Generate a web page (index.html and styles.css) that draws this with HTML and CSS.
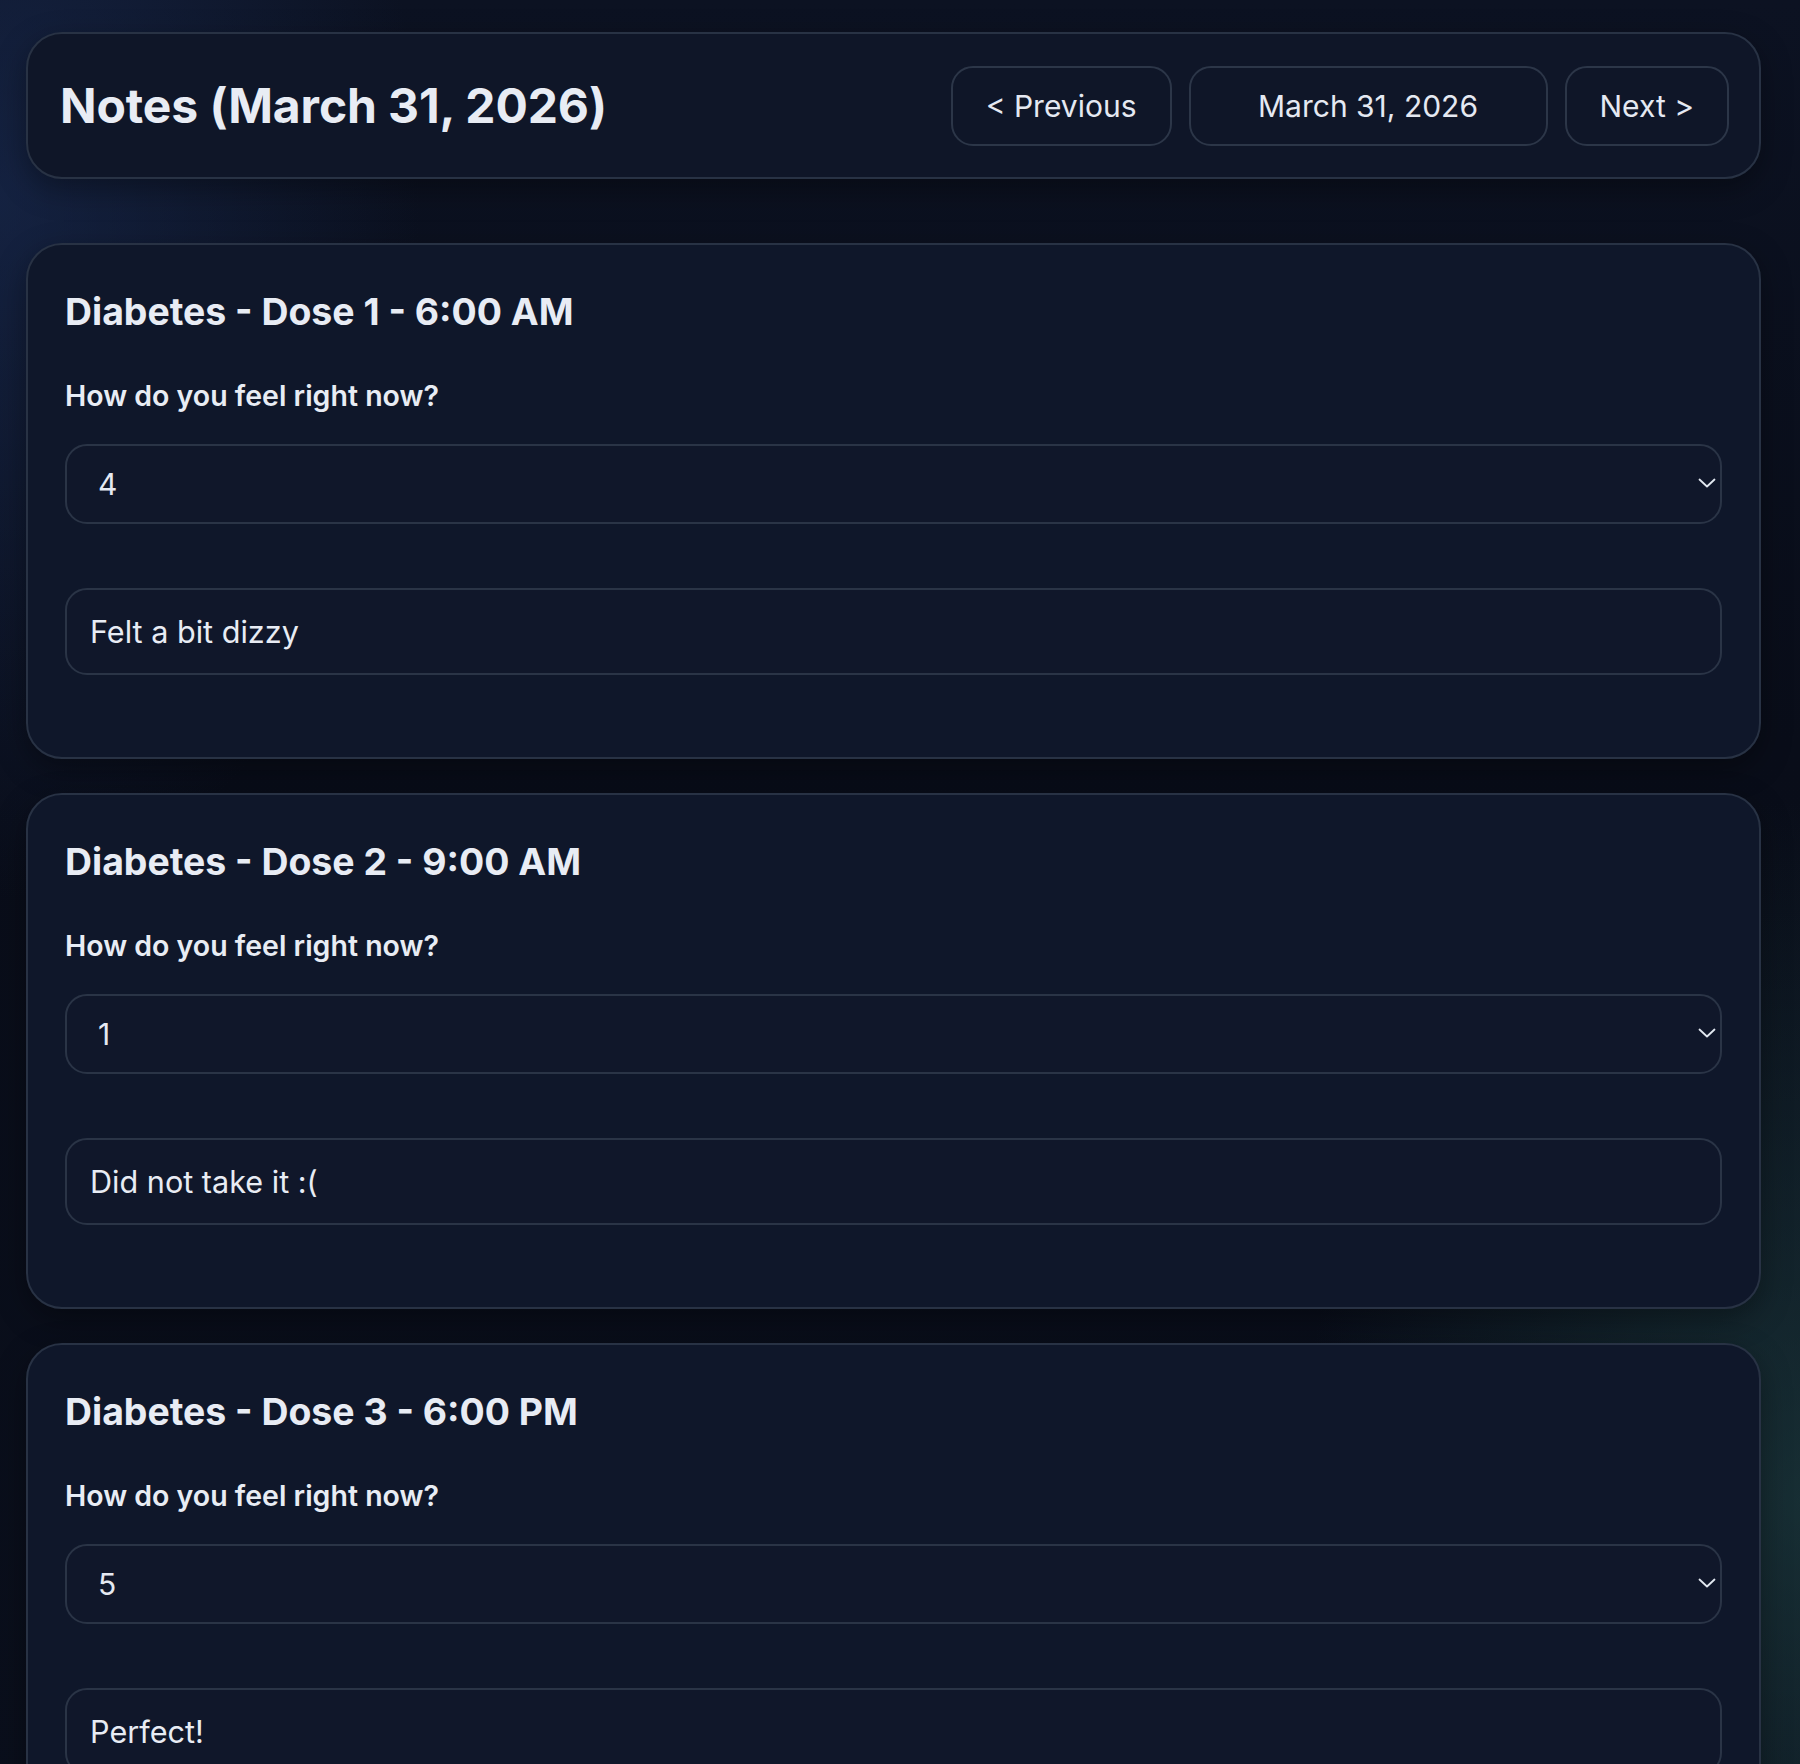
FILE: index.html
```html
<!DOCTYPE html>
<html lang="en">
<head>
<meta charset="utf-8">
<title>Notes</title>
<link rel="stylesheet" href="styles.css">
</head>
<body>
<div class="page">
  <header class="topbar">
    <h1 class="title">Notes (March 31, 2026)</h1>
    <nav class="datenav">
      <button class="btn">&lt; Previous</button>
      <button class="btn btn-date">March 31, 2026</button>
      <button class="btn">Next &gt;</button>
    </nav>
  </header>

  <section class="card">
    <h2 class="card-title">Diabetes - Dose 1 - 6:00 AM</h2>
    <label class="label">How do you feel right now?</label>
    <div class="select-wrap">
      <select class="select"><option>4</option></select>
      <svg class="chev" viewBox="0 0 18 10" width="18" height="10"><path d="M1.5 1.5 L9 8.5 L16.5 1.5" fill="none" stroke="#e2e8f0" stroke-width="1.8" stroke-linecap="round" stroke-linejoin="round"/></svg>
    </div>
    <input class="input" type="text" value="Felt a bit dizzy">
  </section>

  <section class="card">
    <h2 class="card-title">Diabetes - Dose 2 - 9:00 AM</h2>
    <label class="label">How do you feel right now?</label>
    <div class="select-wrap">
      <select class="select"><option>1</option></select>
      <svg class="chev" viewBox="0 0 18 10" width="18" height="10"><path d="M1.5 1.5 L9 8.5 L16.5 1.5" fill="none" stroke="#e2e8f0" stroke-width="1.8" stroke-linecap="round" stroke-linejoin="round"/></svg>
    </div>
    <input class="input" type="text" value="Did not take it :(">
  </section>

  <section class="card">
    <h2 class="card-title">Diabetes - Dose 3 - 6:00 PM</h2>
    <label class="label">How do you feel right now?</label>
    <div class="select-wrap">
      <select class="select"><option>5</option></select>
      <svg class="chev" viewBox="0 0 18 10" width="18" height="10"><path d="M1.5 1.5 L9 8.5 L16.5 1.5" fill="none" stroke="#e2e8f0" stroke-width="1.8" stroke-linecap="round" stroke-linejoin="round"/></svg>
    </div>
    <input class="input" type="text" value="Perfect!">
  </section>
</div>
</body>
</html>
```

FILE: styles.css
```css
html, body {
  margin: 0;
  padding: 0;
}
body {
  font-family: Inter, "Noto Sans", "Liberation Sans", sans-serif;
  color: #e5e9f2;
  min-height: 1764px;
  background-color: #0a0e1a;
  background-image:
    radial-gradient(ellipse 420px 700px at 0px 200px, rgba(28, 48, 92, 0.55), rgba(28, 48, 92, 0) 100%),
    radial-gradient(ellipse 500px 700px at 1800px 1500px, rgba(34, 72, 72, 0.55), rgba(34, 72, 72, 0) 100%),
    linear-gradient(180deg, #0c1222 0%, #090d19 40%, #0a0f1c 100%);
  overflow: hidden;
}
.page {
  padding: 32px 39px 0 26px;
  display: flex;
  flex-direction: column;
}
.topbar {
  display: flex;
  align-items: center;
  justify-content: space-between;
  height: 147px;
  box-sizing: border-box;
  padding: 0 30px 0 32px;
  background: #0f1628;
  border: 2px solid #283244;
  border-radius: 36px;
  box-shadow: 0 10px 30px rgba(0,0,0,0.35);
}
.title {
  margin: 0;
  font-size: 48px;
  font-weight: 700;
  letter-spacing: -0.1px;
  color: #e8ecf4;
}
.datenav {
  display: flex;
  gap: 17px;
}
.btn {
  height: 80px;
  box-sizing: border-box;
  padding: 0 33px;
  font-family: inherit;
  font-size: 30px;
  color: #e5e9f2;
  background: #0f1628;
  border: 2px solid #2c3648;
  border-radius: 22px;
}
.btn-date {
  width: 359px;
}
.card {
  margin-top: 34px;
  padding: 43px 37px 82px 37px;
  background: #0f172a;
  border: 2px solid #283244;
  border-radius: 36px;
  display: flex;
  flex-direction: column;
  box-shadow: 0 10px 30px rgba(0,0,0,0.35);
}
.topbar + .card {
  margin-top: 64px;
}
.card-title {
  margin: 0;
  font-size: 37.4px;
  line-height: 48px;
  font-weight: 700;
  color: #e8ecf4;
}
.label {
  margin-top: 42px;
  font-size: 28.5px;
  line-height: 36px;
  font-weight: 600;
  color: #e8ecf4;
}
.select-wrap {
  position: relative;
  margin-top: 30px;
}
.select {
  -webkit-appearance: none;
  appearance: none;
  width: 100%;
  height: 80px;
  box-sizing: border-box;
  padding: 0 31px;
  font-family: inherit;
  font-size: 30px;
  color: #e5e9f2;
  background: #10172a;
  border: 2px solid #2a3446;
  border-radius: 22px;
  outline: none;
}
.chev {
  position: absolute;
  right: 6px;
  top: 34px;
}
.input {
  margin-top: 64px;
  width: 100%;
  height: 87px;
  box-sizing: border-box;
  padding: 0 23px;
  font-family: inherit;
  font-size: 30.6px;
  color: #e8ecf4;
  background: #10172a;
  border: 2px solid #2a3446;
  border-radius: 22px;
  outline: none;
}
```
